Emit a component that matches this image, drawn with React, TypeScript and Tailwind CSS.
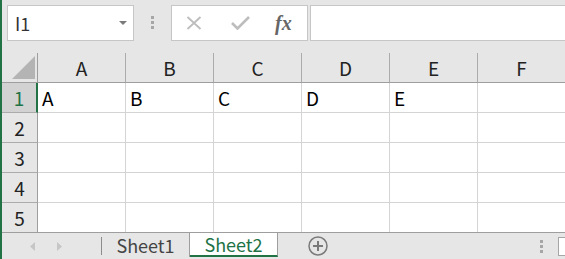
const cols = ["A", "B", "C", "D", "E", "F"];
const rows = [1, 2, 3, 4, 5];

function Dots({ className }: { className?: string }) {
  return (
    <div className={"flex flex-col gap-[2px] " + (className ?? "")}>
      <div className="w-[3px] h-[3px] bg-[#a6a6a6]" />
      <div className="w-[3px] h-[3px] bg-[#a6a6a6]" />
      <div className="w-[3px] h-[3px] bg-[#a6a6a6]" />
    </div>
  );
}

export default function App() {
  return (
    <div className="w-[565px] h-[259px] overflow-hidden bg-[#e6e6e6] border-l-2 border-[#217346] flex flex-col font-['Noto_Sans_CJK_JP',sans-serif] text-[#222]">
      {/* formula bar */}
      <div className="h-[53px] shrink-0 flex items-start pt-[5px] pl-[5px]">
        <div className="w-[127px] h-[36px] shrink-0 bg-white border border-[#c6c6c6] flex items-center pl-[7px] pr-[6px]">
          <span className="flex-1 text-[18px] leading-none text-[#333]">I1</span>
          <svg width="8" height="4" viewBox="0 0 8 4">
            <path d="M0 0h8L4 4z" fill="#7a7a7a" />
          </svg>
        </div>
        <Dots className="ml-[17px] mt-[11px]" />
        <div className="ml-[17px] w-[137px] h-[36px] shrink-0 bg-white border border-[#c6c6c6] flex items-center">
          <svg className="ml-[14px]" width="16" height="14" viewBox="0 0 16 14">
            <path d="M1.5 1l13 12M14.5 1l-13 12" stroke="#bdbdbd" strokeWidth="1.8" fill="none" />
          </svg>
          <svg className="ml-[29px]" width="19" height="14" viewBox="0 0 19 14">
            <path d="M1 7l5.5 5.5L18 1" stroke="#bdbdbd" strokeWidth="2.6" fill="none" />
          </svg>
          <span className="ml-[25px] text-[20px] italic font-bold text-[#666] font-['Liberation_Serif',serif] leading-none">
            fx
          </span>
        </div>
        <div className="ml-[2px] flex-1 h-[36px] bg-white border border-[#c6c6c6] border-r-0" />
      </div>

      {/* column header */}
      <div className="h-[30px] shrink-0 flex border-b border-[#9e9e9e]">
        <div className="w-[36px] shrink-0 border-r border-[#9e9e9e] flex items-end justify-end pr-[2px] pb-[3px]">
          <svg width="23" height="23" viewBox="0 0 23 23">
            <path d="M23 0V23H0z" fill="#b4b4b4" />
          </svg>
        </div>
        {cols.map((c) => (
          <div
            key={c}
            className="w-[88px] shrink-0 border-r border-[#ababab] flex items-center justify-center text-[19px] leading-none"
          >
            {c}
          </div>
        ))}
      </div>

      {/* rows */}
      {rows.map((r) => (
        <div key={r} className={"shrink-0 flex " + (r < 5 ? "h-[30px] border-b border-[#d4d4d4]" : "h-[29px]")}>
          <div
            className={
              "w-[36px] shrink-0 flex items-center justify-center text-[19px] leading-none " +
              (r === 1
                ? "bg-[#d2d2d2] text-[#217346] border-r-2 border-r-[#217346]"
                : "border-r border-r-[#9e9e9e]") +
              (r < 5 ? " border-b border-b-[#ababab] -mb-px" : "")
            }
          >
            {r}
          </div>
          {cols.map((c, i) => (
            <div
              key={c}
              className="w-[88px] shrink-0 bg-white border-r border-[#d4d4d4] flex items-center pl-[4px] text-[19px] leading-none text-black"
            >
              {r === 1 && i < 5 ? c : ""}
            </div>
          ))}
        </div>
      ))}

      {/* sheet tabs */}
      <div className="flex-1 flex items-start border-t border-[#9e9e9e]">
        <svg className="ml-[28px] mt-[9px]" width="5" height="9" viewBox="0 0 5 9">
          <path d="M5 0v9L0 4.5z" fill="#c6c6c6" />
        </svg>
        <svg className="ml-[22px] mt-[9px]" width="5" height="9" viewBox="0 0 5 9">
          <path d="M0 0v9l5-4.5z" fill="#c6c6c6" />
        </svg>
        <div className="ml-[39px] mt-[4px] w-px h-[18px] bg-[#8c8c8c]" />
        <div className="w-[88px] h-[24px] border-r border-[#9e9e9e] flex items-center justify-center text-[18px] leading-none text-[#444]">
          Sheet1
        </div>
        <div className="w-[88px] h-[24px] bg-white border-r border-[#9e9e9e] border-b-2 border-b-[#217346] flex items-center justify-center text-[18px] leading-none text-[#217346]">
          Sheet2
        </div>
        <svg className="ml-[30px] mt-[3px]" width="20" height="20" viewBox="0 0 20 20">
          <circle cx="10" cy="10" r="9" stroke="#7a7a7a" strokeWidth="1.5" fill="none" />
          <path d="M10 5v10M5 10h10" stroke="#7a7a7a" strokeWidth="2" />
        </svg>
        <Dots className="ml-[212px] mt-[7px]" />
        <div className="ml-[15px] mt-[4px] flex-1 h-[19px] bg-white border border-[#a6a6a6] border-r-0" />
      </div>
    </div>
  );
}
